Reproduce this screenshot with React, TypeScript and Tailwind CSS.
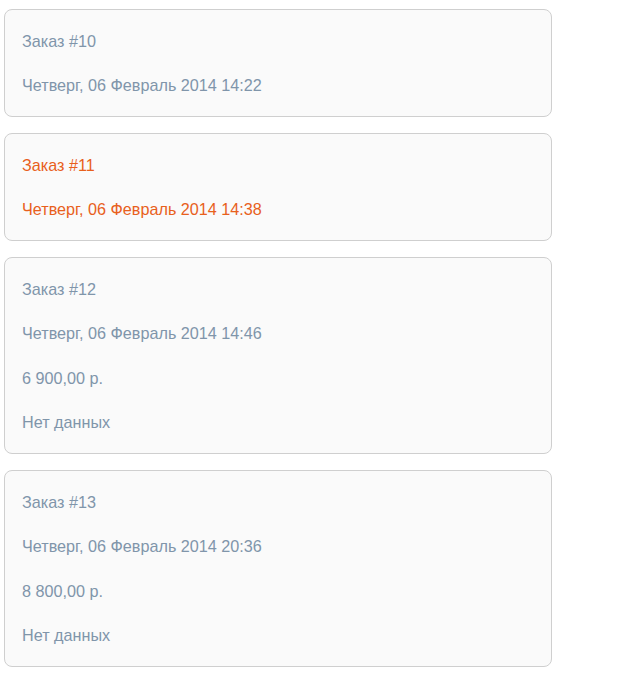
import React from "react";

type Order = { title: string; date: string; extra?: string[]; active?: boolean };

const orders: Order[] = [
  { title: "Заказ #10", date: "Четверг, 06 Февраль 2014 14:22" },
  { title: "Заказ #11", date: "Четверг, 06 Февраль 2014 14:38", active: true },
  { title: "Заказ #12", date: "Четверг, 06 Февраль 2014 14:46", extra: ["6 900,00 р.", "Нет данных"] },
  { title: "Заказ #13", date: "Четверг, 06 Февраль 2014 20:36", extra: ["8 800,00 р.", "Нет данных"] },
];

export default function App() {
  return (
    <div
      className="bg-white min-h-[683px] pt-[9px] pl-[4px] flex flex-col gap-[16px]"
      style={{ fontFamily: '"Liberation Sans", Arial, sans-serif' }}
    >
      {orders.map((o) => {
        const rows = [o.title, o.date, ...(o.extra ?? [])];
        return (
          <div
            key={o.title}
            className={`w-[548px] rounded-[8px] border border-[#cfcfcf] bg-[#fafafa] pt-[8.5px] pb-[8.5px] pl-[17px] text-[16.2px] ${
              o.active ? "text-[#e8601c]" : "text-[#8095aa]"
            }`}
          >
            {rows.map((r, i) => (
              <div key={i} className="h-[44.5px] flex items-center">
                {r}
              </div>
            ))}
          </div>
        );
      })}
    </div>
  );
}
